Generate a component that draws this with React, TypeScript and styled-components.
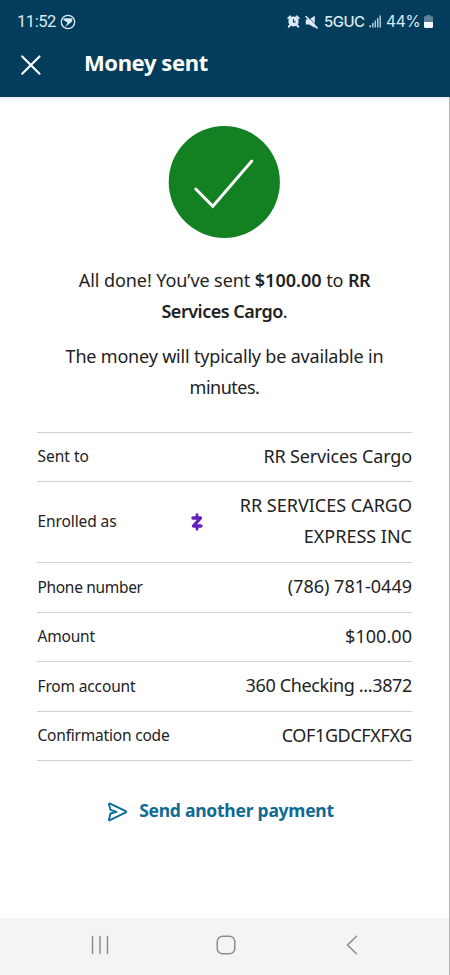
import React from "react";
import styled, { createGlobalStyle } from "styled-components";

const GlobalStyle = createGlobalStyle`
  * { box-sizing: border-box; }
  body { margin: 0; background: #fff; }
`;

const Screen = styled.div`
  display: flex;
  flex-direction: column;
  width: 450px;
  height: 975px;
  overflow: hidden;
  background: #fff;
  color: #222;
  font-family: "Noto Sans", "Open Sans", sans-serif;
`;

const Header = styled.header`
  flex: none;
  height: 97px;
  background: #033d5b;
  color: #fff;
`;

const StatusBar = styled.div`
  display: flex;
  justify-content: space-between;
  align-items: center;
  height: 43px;
  padding: 0 17px 0 17px;
  color: #dcebf5;
  font-family: Roboto, sans-serif;
`;

const StatusGroup = styled.div`
  display: flex;
  align-items: center;
`;

const Clock = styled.span`
  width: 43px;
  font-size: 16.5px;
  letter-spacing: -0.45px;
  white-space: nowrap;
`;

const Network = styled.span`
  width: 41px;
  margin-left: 6px;
  font: 500 15px Inter, sans-serif;
  letter-spacing: -0.55px;
`;

const Battery = styled.span`
  width: 38px;
  margin-left: 4px;
  font: 400 15.5px Inter, sans-serif;
  letter-spacing: -0.3px;
`;

const Glyph = styled.svg<{ $gap?: number }>`
  display: block;
  flex: none;
  margin-left: ${(p) => p.$gap ?? 0}px;
`;

const TitleBar = styled.div`
  display: flex;
  align-items: center;
  height: 43px;
  padding-left: 20px;
`;

const CloseButton = styled.button`
  display: flex;
  padding: 0;
  border: 0;
  background: none;
  color: inherit;
`;

const Title = styled.h1`
  margin: -6px 0 0 42px;
  font-size: 22px;
  line-height: 30px;
  font-weight: 700;
  letter-spacing: -0.4px;
`;

const Content = styled.main`
  flex: 1;
  display: flex;
  flex-direction: column;
  align-items: center;
  border-right: 1px solid #b4b6b8;
  background: linear-gradient(#e9f1f5, #fff 5px);
`;

const SuccessMark = styled.svg`
  display: block;
  flex: none;
  margin: 28px 0 0 -1px;
`;

const Message = styled.p<{ $top: number; $track: number }>`
  margin: ${(p) => p.$top}px 0 0;
  font-size: 18px;
  line-height: 31.2px;
  letter-spacing: ${(p) => p.$track}px;
  text-align: center;
`;

const Strong = styled.strong<{ $track: number }>`
  font-weight: 600;
  letter-spacing: ${(p) => p.$track}px;
`;

const Tight = styled.span`
  letter-spacing: -0.5px;
`;

const Details = styled.dl`
  width: 375px;
  margin: 29px 0 0;
  border-top: 1px solid #d0d0d0;
`;

const DetailRow = styled.div<{ $height: number }>`
  display: flex;
  align-items: center;
  justify-content: space-between;
  height: ${(p) => p.$height}px;
  padding-bottom: 2px;
  border-bottom: 1px solid #d0d0d0;
`;

const Label = styled.dt<{ $track: number }>`
  padding-left: 0.5px;
  font-size: 15.5px;
  letter-spacing: ${(p) => p.$track}px;
  white-space: nowrap;
`;

const Value = styled.dd<{ $track: number }>`
  margin: 0;
  font-size: 18px;
  line-height: 31px;
  letter-spacing: ${(p) => p.$track}px;
  text-align: right;
  white-space: pre-line;
`;

const ZelleValue = styled.div`
  display: flex;
  align-items: center;
  justify-content: space-between;
  width: 221px;
`;

const SendAnother = styled.button`
  display: flex;
  align-items: center;
  gap: 11px;
  margin: 35px 0 0 -8px;
  padding: 0;
  border: 0;
  background: none;
  color: #0d6b94;
  font: 700 17.5px/28px "Noto Sans", sans-serif;
  letter-spacing: -0.25px;
  white-space: nowrap;
`;

const PlaneIcon = styled.svg`
  display: block;
  flex: none;
  margin-top: 3px;
`;

const NavBar = styled.nav`
  flex: none;
  display: grid;
  grid-template-columns: repeat(3, 126px);
  justify-content: center;
  align-items: center;
  justify-items: center;
  height: 57px;
  padding: 0 0 3px 2px;
  border-right: 1px solid #b4b6b8;
  background: #f4f4f7;
`;

type Detail = {
  label: string;
  value: string;
  labelTrack: number;
  valueTrack: number;
  height: number;
  zelle?: boolean;
};

const details: Detail[] = [
  { label: "Sent to", value: "RR Services Cargo", labelTrack: 0, valueTrack: -0.15, height: 49 },
  { label: "Enrolled as", value: "RR SERVICES CARGO\nEXPRESS INC", labelTrack: -0.1, valueTrack: 0, height: 81, zelle: true },
  { label: "Phone number", value: "(786) 781-0449", labelTrack: -0.32, valueTrack: 0, height: 49.5 },
  { label: "Amount", value: "$100.00", labelTrack: -0.2, valueTrack: 0.05, height: 49.5 },
  { label: "From account", value: "360 Checking ...3872", labelTrack: -0.15, valueTrack: -0.36, height: 49.5 },
  { label: "Confirmation code", value: "COF1GDCFXFXG", labelTrack: -0.2, valueTrack: -0.38, height: 49.5 },
];

const BirdIcon = () => (
  <Glyph width="16" height="16" viewBox="0 0 16 16" fill="none">
    <circle cx="8" cy="8" r="6.7" stroke="currentColor" strokeWidth="1.300" />
    <path d="M3 5.200C5 3.600 7 4.300 8.500 4.200L12.300 4.400C12.800 6.500 11.500 8.300 10 9.300 8.500 10.300 7.200 12 4.800 12.700 6.500 11.200 7.300 9.900 7.300 8.500 6.500 7.500 4.500 7 3 5.200Z" fill="currentColor" />
  </Glyph>
);

const AlarmIcon = () => (
  <Glyph width="13" height="13" viewBox="0 0 14 14">
    <path d="M1.500 3.500 3.500 1.500M12.500 3.500 10.500 1.500M3.200 11 2 12.500M10.800 11l1.200 1.500" stroke="currentColor" strokeWidth="2.200" strokeLinecap="round" />
    <circle cx="7" cy="7" r="5.500" fill="currentColor" />
    <path d="M7 4.200v3.200h2.300" stroke="#033d5b" strokeWidth="1.200" fill="none" />
  </Glyph>
);

const MuteIcon = () => (
  <Glyph $gap={5.5} width="13" height="14" viewBox="0 0 13 14">
    <path d="M.8 4.500h3.500L9.800.8v12L4.300 9.500H.8Z" fill="currentColor" />
    <path d="M2.600 1.300 12.600 11.500" stroke="#033d5b" strokeWidth=".8" />
    <path d="M1 1.500 12 12.900" stroke="currentColor" strokeWidth="1.600" strokeLinecap="round" />
  </Glyph>
);

const SignalIcon = () => (
  <Glyph $gap={4} width="13" height="13" viewBox="0 0 13 13" fill="currentColor">
    <path d="M.5 10H2v2.500H.5zM3 8h1.500v4.500H3zM5.500 5.500H7v7H5.500zM8 3h1.500v9.500H8zM10.500.5H12v12h-1.500z" opacity=".8" />
  </Glyph>
);

const BatteryIcon = () => (
  <Glyph width="9" height="13" viewBox="0 0 9 13">
    <path d="M2.500 0h4v1.200H8q1 0 1 1V7H0V2.200q0-1 1-1h1.500Z" fill="#5d8298" />
    <path d="M0 7h9v4.500q0 1.500-1.500 1.500h-6Q0 13 0 11.500Z" fill="#f3f9fc" />
  </Glyph>
);

const ZelleIcon = () => (
  <Glyph width="12" height="20" viewBox="0 -2 12 20" fill="none" stroke="#6620bc" strokeLinejoin="round" strokeLinecap="round">
    <path d="M2 5h7.500L2.500 13h7.500" strokeWidth="3.400" />
    <path d="M6 1.700v3M6 13.700v2.600" strokeWidth="2.800" />
  </Glyph>
);

export default function App() {
  return (
    <>
      <GlobalStyle />
      <Screen>
        <Header>
          <StatusBar>
            <StatusGroup>
              <Clock>11:52</Clock>
              <BirdIcon />
            </StatusGroup>
            <StatusGroup>
              <AlarmIcon />
              <MuteIcon />
              <Network>5GUC</Network>
              <SignalIcon />
              <Battery>44%</Battery>
              <BatteryIcon />
            </StatusGroup>
          </StatusBar>
          <TitleBar>
            <CloseButton aria-label="Close">
              <Glyph width="22" height="22" viewBox="0 0 22 22" stroke="currentColor" strokeWidth="2.100" strokeLinecap="round">
                <path d="M2.200 2.400 19.500 19.700M19.500 2.400 2.200 19.700" />
              </Glyph>
            </CloseButton>
            <Title>Money sent</Title>
          </TitleBar>
        </Header>
        <Content>
          <SuccessMark width="112" height="113" viewBox="0 0 112 113" fill="none">
            <ellipse cx="56.300" cy="57" rx="55.600" ry="56" fill="#138022" />
            <path d="M27.800 64 44.800 81.300 83.800 36" stroke="#fff" strokeWidth="2.900" strokeLinecap="round" />
          </SuccessMark>
          <Message $top={27} $track={-0.08}>
            All done! You’ve sent <Strong $track={0}>$100.00</Strong> to <Strong $track={-0.5}>RR<br />Services Cargo</Strong>.
          </Message>
          <Message $top={13.5} $track={-0.19}>
            The money will typically be available in<br />
            <Tight>minutes.</Tight>
          </Message>
          <Details>
            {details.map((d) => (
              <DetailRow key={d.label} $height={d.height}>
                <Label $track={d.labelTrack}>{d.label}</Label>
                {d.zelle ? (
                  <ZelleValue>
                    <ZelleIcon />
                    <Value $track={d.valueTrack}>{d.value}</Value>
                  </ZelleValue>
                ) : (
                  <Value $track={d.valueTrack}>{d.value}</Value>
                )}
              </DetailRow>
            ))}
          </Details>
          <SendAnother>
            <PlaneIcon width="21" height="20" viewBox="0 0 21 20" fill="none" stroke="currentColor" strokeWidth="1.900" strokeLinejoin="round" strokeLinecap="round">
              <path d="M2 2.500Q1.800 1.200 3 1.700L18.800 9.200q1 .6 0 1.200L3 18.200q-1.300.5-1-.8L3.500 11.500 9.500 9.800 3.500 7.800Z" />
            </PlaneIcon>
            Send another payment
          </SendAnother>
        </Content>
        <NavBar>
          <Glyph width="20" height="20" viewBox="0 0 20 20" stroke="#8c8c8e" strokeWidth="1.500" strokeLinecap="round">
            <path d="M2.500 1.500v17M10 1.500v17M17.500 1.500v17" />
          </Glyph>
          <Glyph width="20" height="20" viewBox="0 0 20 20" fill="none" stroke="#8c8c8e" strokeWidth="1.500">
            <rect x="1.200" y="1.200" width="17.600" height="17.600" rx="5.500" />
          </Glyph>
          <Glyph $gap={1} width="12" height="20" viewBox="0 0 12 20" fill="none" stroke="#8c8c8e" strokeWidth="1.500" strokeLinecap="round">
            <path d="M10.500 1.200 1.500 10l9 8.800" />
          </Glyph>
        </NavBar>
      </Screen>
    </>
  );
}
